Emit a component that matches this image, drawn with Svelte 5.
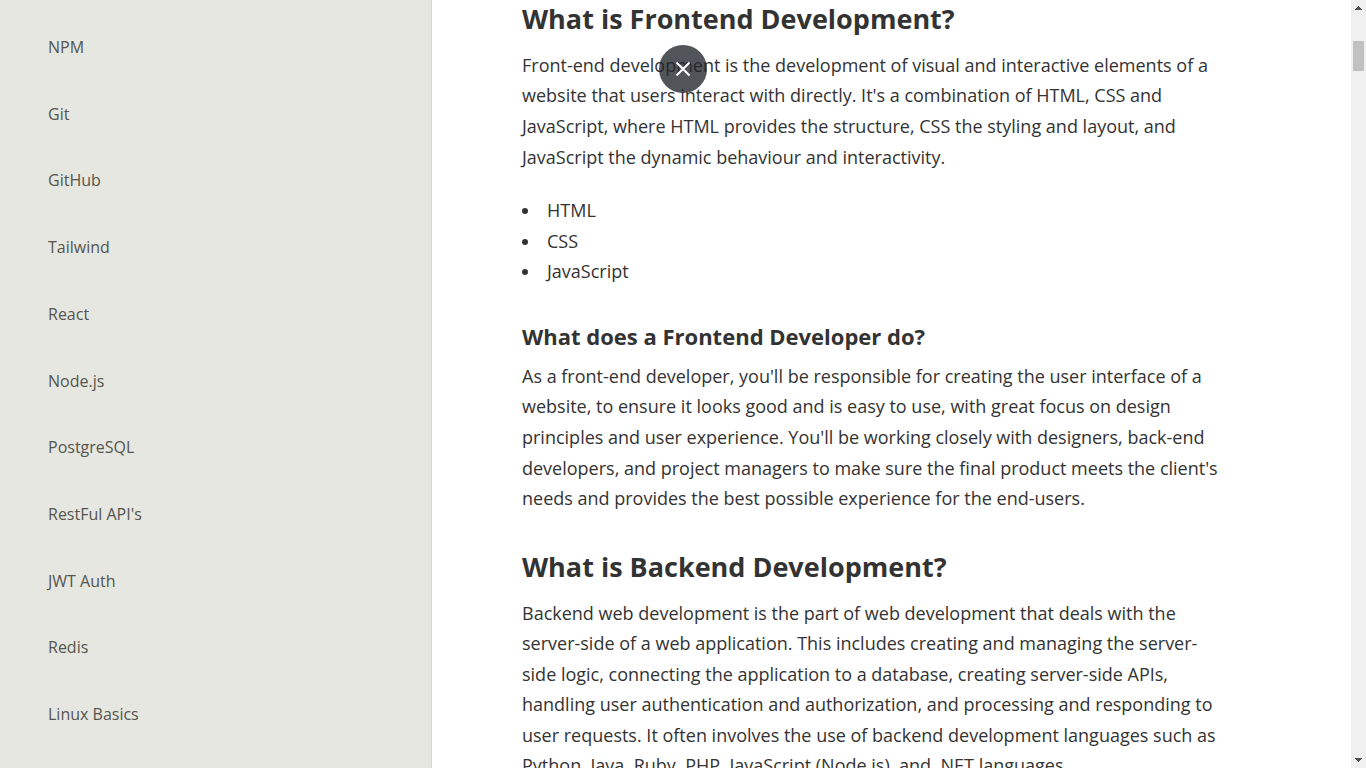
<script>
  const topics = [
    'NPM', 'Git', 'GitHub', 'Tailwind', 'React', 'Node.js',
    'PostgreSQL', "RestFul API's", 'JWT Auth', 'Redis', 'Linux Basics',
  ];
  const skills = ['HTML', 'CSS', 'JavaScript'];
</script>

<div class="page">
  <nav class="sidebar" aria-label="Topics">
    <ul>
      {#each topics as topic}
        <li><a href="#top">{topic}</a></li>
      {/each}
    </ul>
  </nav>

  <main>
    <article>
      <h2>What is Frontend Development?</h2>
      <p>
        Front-end development is the development of visual and interactive elements of a website
        that users interact with directly. It's a combination of HTML, CSS and JavaScript, where
        HTML provides the structure, CSS the styling and layout, and JavaScript the dynamic
        behaviour and interactivity.
      </p>
      <ul class="skills">
        {#each skills as skill}
          <li>{skill}</li>
        {/each}
      </ul>
      <h3>What does a Frontend Developer do?</h3>
      <p>
        As a front-end developer, you'll be responsible for creating the user interface of a
        website, to ensure it looks good and is easy to use, with great focus on design principles
        and user experience. You'll be working closely with designers, back-end developers, and
        project managers to make sure the final product meets the client's needs and provides the
        best possible experience for the end-users.
      </p>
      <h2>What is Backend Development?</h2>
      <p>
        Backend web development is the part of web development that deals with the server-side of
        a web application. This includes creating and managing the server-side logic, connecting
        the application to a database, creating server-side APIs, handling user authentication and
        authorization, and processing and responding to user requests. It often involves the use
        of backend development languages such as Python, Java, Ruby, PHP, JavaScript (Node.js),
        and .NET languages.
      </p>
    </article>
  </main>

  <div class="scrollbar" aria-hidden="true">
    <svg width="15" height="15" viewBox="0 0 15 15" shape-rendering="crispEdges">
      <path d="M7 6h1v1h1v1h1v1h1v1H4V9h1V8h1V7h1z" fill="#505050" />
    </svg>
    <div class="track"><div class="thumb"></div></div>
    <svg width="15" height="15" viewBox="0 0 15 15" shape-rendering="crispEdges">
      <path d="M4 5h7v1h-1v1H9v1H8v1H7V8H6V7H5V6H4z" fill="#505050" />
    </svg>
  </div>

  <button class="close" aria-label="Close">
    <svg width="48" height="48" viewBox="0 0 48 48">
      <path d="M17.5 17.5l13 13M30.5 17.5l-13 13" stroke="#fff" stroke-width="2" fill="none" />
    </svg>
  </button>
</div>

<style>
  .page {
    display: grid;
    grid-template-columns: 432px minmax(0, 1fr) 15px;
    height: 100vh;
    overflow: hidden;
    background: #fff;
    color: #333;
    font-family: 'Open Sans', sans-serif;
    font-size: 18px;
    line-height: 1.7;
  }
  .sidebar {
    box-sizing: border-box;
    padding: 34px 48px 0;
    background: #e6e7e1;
    border-right: 1px solid #d6d8d0;
    overflow: hidden;
  }
  .sidebar ul {
    margin: 0;
    padding: 0;
    list-style: none;
    font-size: 16px;
    line-height: 1.67;
  }
  .sidebar li {
    padding-bottom: 40px;
  }
  .sidebar a {
    color: #55554d;
    text-decoration: none;
  }
  main {
    padding: 0 90px;
    overflow: hidden;
  }
  article {
    max-width: 704px;
  }
  h2,
  h3 {
    margin: 0;
    font-weight: 700;
    line-height: 1.4;
  }
  h2 {
    font-size: 27px;
    margin-bottom: 12px;
  }
  h3 {
    font-size: 22px;
    margin-top: 34px;
    margin-bottom: 9px;
  }
  p {
    margin: 0;
  }
  p + h2 {
    margin-top: 34px;
  }
  .skills {
    margin: 23px 0 0;
    padding: 0;
    list-style-position: inside;
  }
  .scrollbar {
    display: flex;
    flex-direction: column;
    background: #f0f0f0;
  }
  .track {
    flex: 1;
    padding: 26px 2px 0;
  }
  .thumb {
    height: 30px;
    background: #c1c1c1;
  }
  .close {
    position: absolute;
    top: 45px;
    left: calc(50% - 24px);
    width: 48px;
    height: 48px;
    padding: 0;
    border: 0;
    border-radius: 50%;
    background: rgba(32, 36, 42, 0.78);
    cursor: pointer;
  }
  .close svg {
    display: block;
  }
</style>
